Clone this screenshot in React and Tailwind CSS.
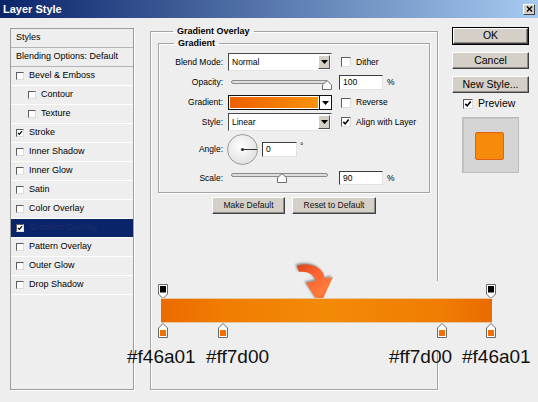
import React from 'react';

const FONT = "font-['Liberation_Sans',Arial,sans-serif]";

function Check({ checked, box }) {
  return (
    <span
      className={`${box} shrink-0 inline-flex items-center justify-center bg-white border border-t-[#5c5c5c] border-l-[#5c5c5c] border-b-[#dcdcdc] border-r-[#dcdcdc]`}
    >
      {checked && (
        <svg viewBox="0 0 8 8" className="w-full h-full">
          <path d="M1.3 3.9 L3.2 5.9 L6.7 1.5" fill="none" stroke="#000" strokeWidth="1.6" />
        </svg>
      )}
    </span>
  );
}

function DownTri() {
  return (
    <svg viewBox="0 0 7 4" className="w-[7px] h-[4px]">
      <path d="M0 0 H7 L3.5 4 Z" fill="#000" />
    </svg>
  );
}

function Select({ value }) {
  return (
    <div className="w-[104px] h-[18px] flex bg-white border border-t-[#4a4a4a] border-l-[#4a4a4a] border-b-[#e4e4e4] border-r-[#e4e4e4]">
      <span className="flex-1 pl-[3px] text-[8.5px] leading-[16px] text-black">{value}</span>
      <span className="w-[12px] my-[1px] mr-[1px] bg-[#d4d0c8] border border-t-white border-l-white border-b-[#505050] border-r-[#505050] flex items-center justify-center">
        <DownTri />
      </span>
    </div>
  );
}

function Slider({ track, thumb }) {
  return (
    <div className="relative w-[104px] h-full">
      <div className={`absolute left-[3px] right-[4px] ${track} h-[4px] rounded-full border border-[#8a8a8a] bg-[#dedede]`} />
      <svg viewBox="0 0 10 10" className={`absolute ${thumb} w-[10px] h-[10px]`}>
        <path d="M0.5 9.5 V4.8 L5 0.6 L9.5 4.8 V9.5 Z" fill="#fafafa" stroke="#6e6e6e" strokeWidth="1" />
      </svg>
    </div>
  );
}

function Field({ value, w }) {
  return (
    <div className={`${w} bg-white border border-t-[#3c3c3c] border-l-[#3c3c3c] border-b-[#e2e2e2] border-r-[#e2e2e2] pl-[3px] text-[8.5px] leading-[12px] text-black`}>
      {value}
    </div>
  );
}

function Btn({ children, w }) {
  return (
    <div
      className={`${w} h-[17px] bg-[#d4d0c8] border border-t-white border-l-white border-b-[#404040] border-r-[#404040] shadow-[inset_-1px_-1px_0_#8a8a8a] flex items-center justify-center text-[8.5px] text-[#111]`}
    >
      {children}
    </div>
  );
}

function RightBtn({ children, def }) {
  const inner = (
    <div className="h-full w-full bg-[#d4d0c8] border border-t-white border-l-white border-b-[#404040] border-r-[#404040] shadow-[inset_-1px_-1px_0_#8a8a8a] flex items-center justify-center text-[10.5px] text-black">
      {children}
    </div>
  );
  if (def) return <div className="w-[77px] h-[18px] border border-black">{inner}</div>;
  return <div className="w-[77px] h-[17px]">{inner}</div>;
}

function Label({ children }) {
  return <span className="w-[64px] text-right text-[8.5px] text-black shrink-0 mr-[5px]">{children}</span>;
}

function OpacityStop({ cls }) {
  return (
    <svg viewBox="0 0 10 15" className={`absolute ${cls} w-[10px] h-[15px]`}>
      <path d="M0.5 0.5 H9.5 V10 L5 14.5 L0.5 10 Z" fill="#fff" stroke="#6a6a6a" />
      <rect x="2" y="2" width="6" height="6.5" fill="#000" />
    </svg>
  );
}

function ColorStop({ cls }) {
  return (
    <svg viewBox="0 0 10 15" className={`absolute ${cls} w-[10px] h-[15px]`}>
      <path d="M0.5 5 L5 0.5 L9.5 5 V14.5 H0.5 Z" fill="#fff" stroke="#6a6a6a" />
      <rect x="2" y="7" width="6" height="6" fill="#f26f02" />
    </svg>
  );
}

const layers = [
  { label: 'Bevel & Emboss' },
  { label: 'Contour', indent: true },
  { label: 'Texture', indent: true },
  { label: 'Stroke', checked: true },
  { label: 'Inner Shadow' },
  { label: 'Inner Glow' },
  { label: 'Satin' },
  { label: 'Color Overlay' },
  { label: 'Gradient Overlay', checked: true, selected: true },
  { label: 'Pattern Overlay' },
  { label: 'Outer Glow' },
  { label: 'Drop Shadow' },
];

const ARROW =
  'M3 5 C 15 1, 29 5, 31 18 L 39 16 L 26 44 L 12 22 L 22 20 C 20 13, 13 10, 5 11 Z';

export default function App() {
  return (
    <div className={`${FONT} relative w-[538px] h-[402px] overflow-hidden bg-[#eeeeee] flex flex-col`}>
      {/* Title bar */}
      <div className="h-[18px] shrink-0 flex items-center justify-between pl-[3px] pr-[3px] bg-[linear-gradient(to_right,#0a246a,#a6caf0)]">
        <span className="text-white font-bold text-[11px] leading-none">Layer Style</span>
        <span className="w-[12px] h-[11px] bg-[#d4d0c8] border border-t-white border-l-white border-b-[#404040] border-r-[#404040] flex items-center justify-center">
          <svg viewBox="0 0 8 7" className="w-[7px] h-[6px]">
            <path d="M1 0.5 L7 6.5 M7 0.5 L1 6.5" stroke="#000" strokeWidth="1.5" />
          </svg>
        </span>
      </div>

      <div className="flex flex-1">
        {/* Left styles list */}
        <div className="ml-[10px] mt-[10px] w-[124px] h-[362px] border border-[#9c9c9c] shadow-[1px_1px_0_#fff] flex flex-col text-[9px] text-black">
          <div className="h-[19px] border-b border-[#b4b4b4] flex items-center pl-[5px]">Styles</div>
          <div className="h-[19px] border-b border-[#b4b4b4] flex items-center pl-[5px]">Blending Options: Default</div>
          {layers.map((l) => (
            <div
              key={l.label}
              className={`h-[19px] border-b border-white flex items-center gap-[5px] ${l.indent ? 'pl-[17px]' : 'pl-[5px]'} ${l.selected ? 'bg-[#0a246a] text-[#1e2f66]' : ''}`}
            >
              <Check checked={l.checked} box="w-[8px] h-[8px]" />
              <span>{l.label}</span>
            </div>
          ))}
        </div>

        {/* Center panel */}
        <fieldset className="ml-[16px] mt-[7px] w-[288px] h-[365px] border border-[#a4a4a4] shadow-[inset_1px_1px_0_#fff,1px_1px_0_#fff] px-[7px] flex flex-col">
          <legend className="ml-[15px] px-[4px] text-[9px] font-bold leading-[12px] text-black">Gradient Overlay</legend>
          <fieldset className="h-[156px] border border-[#a4a4a4] shadow-[inset_1px_1px_0_#fff,1px_1px_0_#fff] flex flex-col">
            <legend className="ml-[15px] px-[4px] text-[9px] font-bold leading-[12px] text-black">Gradient</legend>

            <div className="mt-[4px] h-[18px] flex items-center">
              <Label>Blend Mode:</Label>
              <Select value="Normal" />
              <span className="ml-[9px] flex items-center gap-[5px] text-[8.5px]">
                <Check box="w-[10px] h-[10px]" />
                Dither
              </span>
            </div>

            <div className="mt-[4px] h-[15px] flex items-center">
              <Label>Opacity:</Label>
              <Slider track="top-[5px]" thumb="left-[94px] top-[5px]" />
              <span className="ml-[7px] h-[15px] flex">
                <Field value="100" w="w-[44px]" />
              </span>
              <span className="ml-[4px] text-[8.5px]">%</span>
            </div>

            <div className="mt-[5px] h-[15px] flex items-center">
              <Label>Gradient:</Label>
              <div className="w-[104px] h-[15px] flex border border-[#111] bg-white">
                <div className="flex-1 m-[1px] bg-[linear-gradient(to_right,#ec6000,#f47d06_60%,#f8920e)]" />
                <div className="w-[12px] border-l border-[#111] flex items-center justify-center">
                  <DownTri />
                </div>
              </div>
              <span className="ml-[9px] flex items-center gap-[5px] text-[8.5px]">
                <Check box="w-[10px] h-[10px]" />
                Reverse
              </span>
            </div>

            <div className="mt-[3px] h-[18px] flex items-center">
              <Label>Style:</Label>
              <Select value="Linear" />
              <span className="ml-[9px] flex items-center gap-[5px] text-[8.5px]">
                <Check checked box="w-[10px] h-[10px]" />
                Align with Layer
              </span>
            </div>

            <div className="mt-[3px] h-[31px] flex items-center">
              <Label>Angle:</Label>
              <svg viewBox="0 0 31 31" className="w-[31px] h-[31px] -ml-[1px]">
                <defs>
                  <radialGradient id="dial" cx="45%" cy="40%" r="65%">
                    <stop offset="0" stopColor="#ffffff" />
                    <stop offset="1" stopColor="#dedede" />
                  </radialGradient>
                </defs>
                <circle cx="15.5" cy="15.5" r="15" fill="url(#dial)" stroke="#9a9a9a" />
                <line x1="15.5" y1="15.5" x2="30" y2="15.5" stroke="#333" strokeWidth="1" />
                <circle cx="15.5" cy="15.5" r="1.6" fill="#333" />
              </svg>
              <span className="ml-[4px] h-[15px] flex">
                <Field value="0" w="w-[35px]" />
              </span>
              <span className="ml-[3px] self-start mt-[8px] text-[8.5px] leading-none">°</span>
            </div>

            <div className="mt-[6px] h-[14px] flex items-center">
              <Label>Scale:</Label>
              <Slider track="top-[2px]" thumb="left-[49px] top-[2px]" />
              <span className="ml-[7px] h-[14px] flex">
                <Field value="90" w="w-[44px]" />
              </span>
              <span className="ml-[4px] text-[8.5px]">%</span>
            </div>
          </fieldset>

          <div className="mt-[4px] flex justify-center gap-[7px]">
            <Btn w="w-[73px]">Make Default</Btn>
            <Btn w="w-[84px]">Reset to Default</Btn>
          </div>
        </fieldset>

        {/* Right column */}
        <div className="ml-[14px] mt-[9px] w-[77px] flex flex-col">
          <RightBtn def>OK</RightBtn>
          <div className="mt-[7px]">
            <RightBtn>Cancel</RightBtn>
          </div>
          <div className="mt-[7px]">
            <RightBtn>New Style...</RightBtn>
          </div>
          <div className="mt-[5px] h-[11px] flex items-center gap-[5px] pl-[11px] text-[10.5px] text-black">
            <Check checked box="w-[10px] h-[10px]" />
            Preview
          </div>
          <div className="mt-[8px] ml-[10px] w-[57px] h-[56px] bg-[#d5d5d5] border border-[#bdbdbd] shadow-[inset_1px_1px_0_#c4c4c4] flex items-center justify-center">
            <div className="w-[29px] h-[28px] bg-[#f68a0b] border border-[#e0601c] rounded-[2px] ml-[-2px] mt-[2px]" />
          </div>
        </div>
      </div>

      {/* Gradient editor illustration overlay */}
      <div className="absolute left-[154px] top-[281px] w-[384px] h-[70px] bg-[#eeeeee]" />

      <svg viewBox="0 0 44 46" className="absolute left-[294px] top-[261px] w-[44px] h-[46px]">
        <defs>
          <linearGradient id="arrowFill" x1="0" y1="0" x2="0.8" y2="1">
            <stop offset="0" stopColor="#d8461c" />
            <stop offset="0.4" stopColor="#ff6430" />
            <stop offset="0.75" stopColor="#ff7c3a" />
            <stop offset="1" stopColor="#f85a20" />
          </linearGradient>
          <filter id="arrowShadow" x="-30%" y="-30%" width="160%" height="160%">
            <feGaussianBlur stdDeviation="1" />
          </filter>
        </defs>
        <path d={ARROW} fill="#2a2a2a" opacity="0.5" filter="url(#arrowShadow)" transform="translate(-1.5 -1.5)" />
        <path d={ARROW} fill="url(#arrowFill)" />
      </svg>

      <OpacityStop cls="left-[158px] top-[284px]" />
      <OpacityStop cls="left-[486px] top-[284px]" />

      <div className="absolute left-[161px] top-[298px] w-[331px] h-[25px] border-t border-b border-[#e6c7a2] bg-[linear-gradient(to_right,#ec6a00,#f07c02_18%,#f38a06_50%,#f07c02_85%,#ea6a02)]" />

      <ColorStop cls="left-[158px] top-[323px]" />
      <ColorStop cls="left-[218px] top-[323px]" />
      <ColorStop cls="left-[437px] top-[323px]" />
      <ColorStop cls="left-[486px] top-[323px]" />

      <span className="absolute left-[127px] top-[347px] text-[19px] leading-[19px] text-[#111]">#f46a01</span>
      <span className="absolute left-[206px] top-[347px] text-[19px] leading-[19px] text-[#111]">#ff7d00</span>
      <span className="absolute left-[389px] top-[347px] text-[19px] leading-[19px] text-[#111]">#ff7d00</span>
      <span className="absolute left-[462px] top-[347px] text-[19px] leading-[19px] text-[#111]">#f46a01</span>
    </div>
  );
}
